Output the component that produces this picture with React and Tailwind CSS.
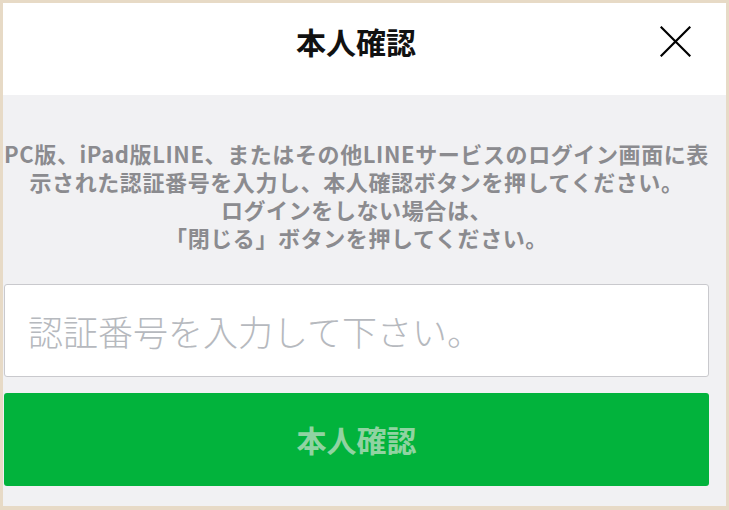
import React from 'react'

function CloseIcon() {
  return (
    <svg width="31" height="31" viewBox="0 0 31 31" fill="none">
      <path d="M1.5 1.5 L29.5 29.5 M29.5 1.5 L1.5 29.5" stroke="#000" strokeWidth="2.2" strokeLinecap="square" />
    </svg>
  )
}

export default function App() {
  const [code, setCode] = React.useState('')

  return (
    <div className="w-[729px] h-[510px] bg-[#e7dac6] pt-[3px] pl-[3px] pr-[3px] pb-[4px] font-['Noto_Sans_CJK_JP',sans-serif]">
      <div className="flex flex-col h-full">
        {/* header */}
        <header className="h-[92px] bg-white shrink-0">
          <div className="w-[706px] grid grid-cols-[1fr_auto_1fr] items-center pt-[18px]">
            <div />
            <h1 className="text-[30px] leading-[40px] font-bold text-[#111]">本人確認</h1>
            <div className="flex justify-end pr-[18px]">
              <button className="w-[31px] h-[31px] flex items-center justify-center">
                <CloseIcon />
              </button>
            </div>
          </div>
        </header>

        {/* body */}
        <main className="flex-1 bg-[#f1f1f3]">
          <div className="w-[705px] ml-[1px]">
            <p className="pt-[44px] text-center text-[22px] leading-[28px] tracking-[0.6px] font-bold text-[#8b8b8f] whitespace-nowrap">
              PC版、iPad版LINE、またはその他LINEサービスのログイン画面に表
              <br />
              示された認証番号を入力し、本人確認ボタンを押してください。
              <br />
              ログインをしない場合は、
              <br />
              「閉じる」ボタンを押してください。
            </p>

            <input
              type="text"
              value={code}
              onChange={(e) => setCode(e.target.value)}
              placeholder="認証番号を入力して下さい。"
              className="mt-[33px] block w-full h-[93px] bg-white border border-[#c9c9cd] rounded-[3px] px-[23px] text-[35px] font-light text-[#333] placeholder:text-[#b6b9be] outline-none"
            />

            <button
              disabled={!code}
              className="mt-[16px] block w-full h-[93px] rounded-[3px] bg-[#02b33c] text-[30px] font-bold text-[#90d3a2]"
            >
              本人確認
            </button>
          </div>
        </main>
      </div>
    </div>
  )
}
